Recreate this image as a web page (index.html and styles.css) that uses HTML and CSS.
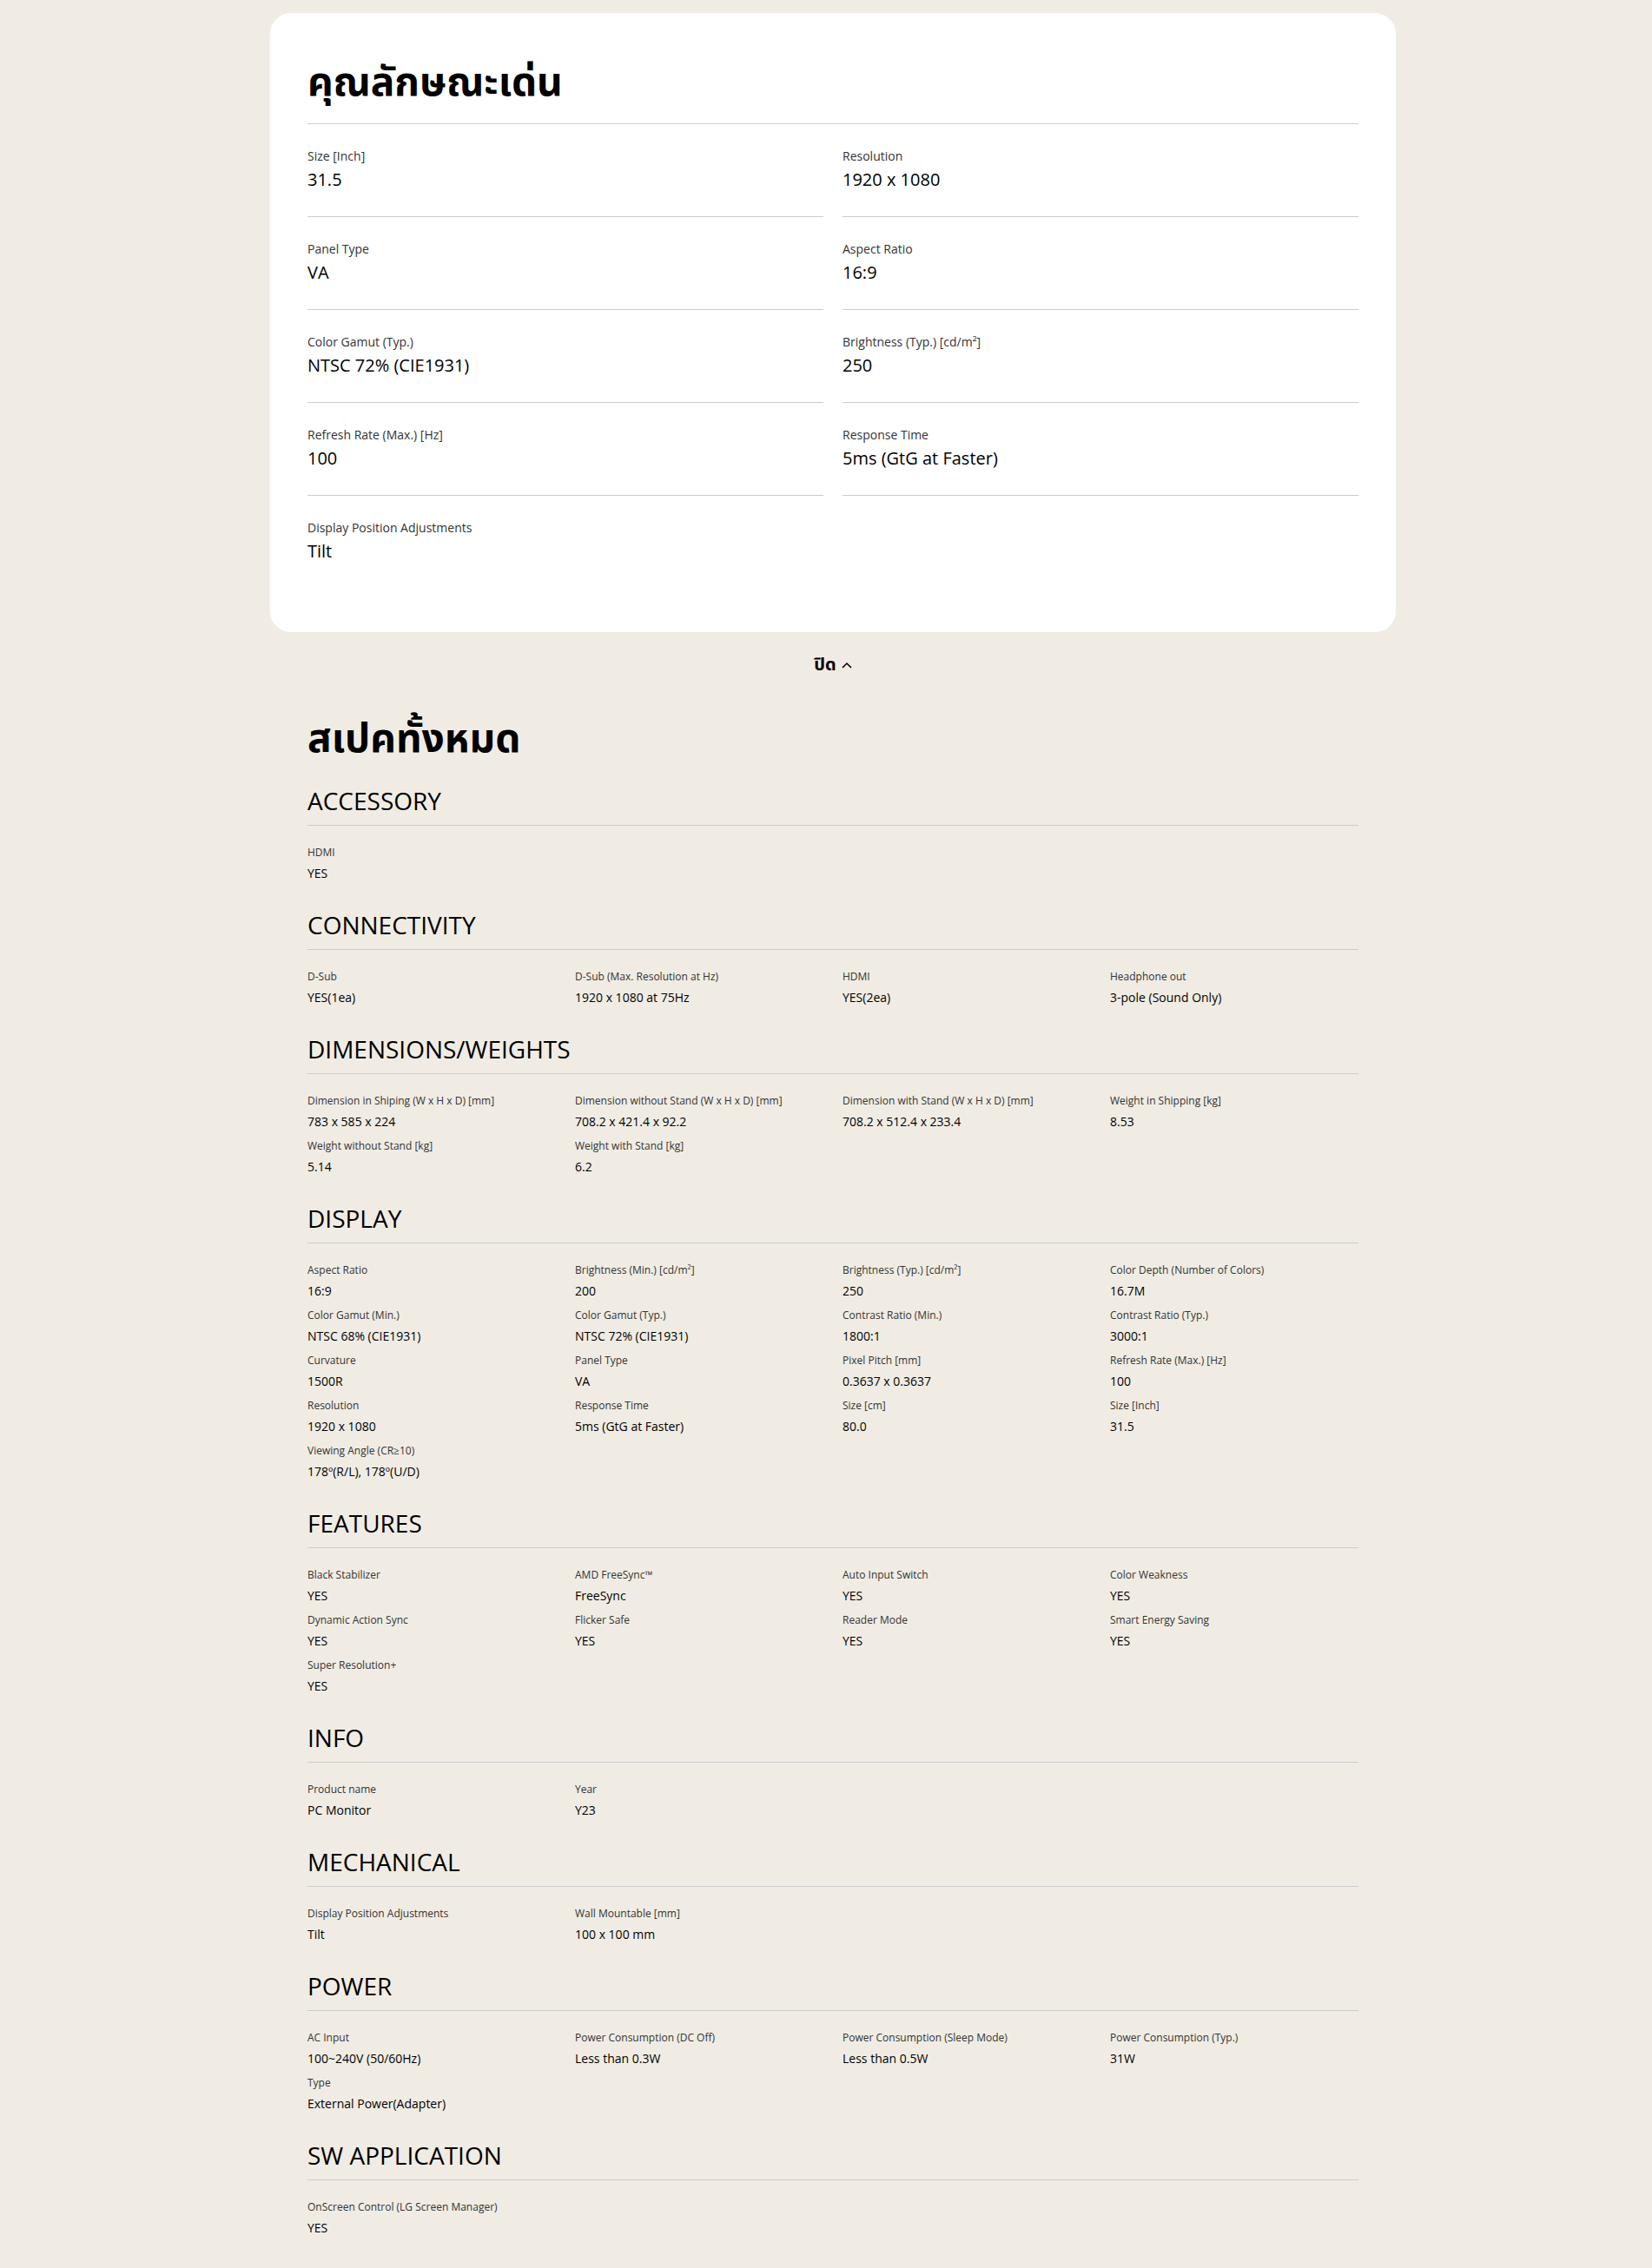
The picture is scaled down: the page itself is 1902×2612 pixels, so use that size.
FILE: index.html
```html
<!DOCTYPE html>
<html lang="th">
<head>
    <meta charset="UTF-8">
    <meta name="viewport" content="width=device-width, initial-scale=1.0">
    <title>สเปค PC Monitor</title>
    <link rel="stylesheet" href="styles.css">
</head>
<body>
    <div class="page">
        <section class="key-card">
            <h2 class="big-title">คุณลักษณะเด่น</h2>
            <div class="key-grid">
                <div class="key-item"><span class="key-label">Size [Inch]</span><span class="key-value">31.5</span></div>
                <div class="key-item"><span class="key-label">Resolution</span><span class="key-value">1920 x 1080</span></div>
                <div class="key-item"><span class="key-label">Panel Type</span><span class="key-value">VA</span></div>
                <div class="key-item"><span class="key-label">Aspect Ratio</span><span class="key-value">16:9</span></div>
                <div class="key-item"><span class="key-label">Color Gamut (Typ.)</span><span class="key-value">NTSC 72% (CIE1931)</span></div>
                <div class="key-item"><span class="key-label">Brightness (Typ.) [cd/m²]</span><span class="key-value">250</span></div>
                <div class="key-item"><span class="key-label">Refresh Rate (Max.) [Hz]</span><span class="key-value">100</span></div>
                <div class="key-item"><span class="key-label">Response Time</span><span class="key-value">5ms (GtG at Faster)</span></div>
                <div class="key-item"><span class="key-label">Display Position Adjustments</span><span class="key-value">Tilt</span></div>
            </div>
        </section>

        <div class="toggle-row">
            <button class="toggle-btn">ปิด
                <svg width="12" height="8" viewBox="0 0 12 8"><polyline points="1,7 6,2 11,7" fill="none" stroke="#000" stroke-width="1.5"/></svg>
            </button>
        </div>

        <div class="specs">
            <h2 class="big-title specs-title">สเปคทั้งหมด</h2>

            <section class="spec-section">
                <h3 class="spec-head">ACCESSORY</h3>
                <div class="spec-grid">
                    <div class="spec-item"><span class="spec-label">HDMI</span><span class="spec-value">YES</span></div>
                </div>
            </section>

            <section class="spec-section">
                <h3 class="spec-head">CONNECTIVITY</h3>
                <div class="spec-grid">
                    <div class="spec-item"><span class="spec-label">D-Sub</span><span class="spec-value">YES(1ea)</span></div>
                    <div class="spec-item"><span class="spec-label">D-Sub (Max. Resolution at Hz)</span><span class="spec-value">1920 x 1080 at 75Hz</span></div>
                    <div class="spec-item"><span class="spec-label">HDMI</span><span class="spec-value">YES(2ea)</span></div>
                    <div class="spec-item"><span class="spec-label">Headphone out</span><span class="spec-value">3-pole (Sound Only)</span></div>
                </div>
            </section>

            <section class="spec-section">
                <h3 class="spec-head">DIMENSIONS/WEIGHTS</h3>
                <div class="spec-grid">
                    <div class="spec-item"><span class="spec-label">Dimension in Shiping (W x H x D) [mm]</span><span class="spec-value">783 x 585 x 224</span></div>
                    <div class="spec-item"><span class="spec-label">Dimension without Stand (W x H x D) [mm]</span><span class="spec-value">708.2 x 421.4 x 92.2</span></div>
                    <div class="spec-item"><span class="spec-label">Dimension with Stand (W x H x D) [mm]</span><span class="spec-value">708.2 x 512.4 x 233.4</span></div>
                    <div class="spec-item"><span class="spec-label">Weight in Shipping [kg]</span><span class="spec-value">8.53</span></div>
                    <div class="spec-item"><span class="spec-label">Weight without Stand [kg]</span><span class="spec-value">5.14</span></div>
                    <div class="spec-item"><span class="spec-label">Weight with Stand [kg]</span><span class="spec-value">6.2</span></div>
                </div>
            </section>

            <section class="spec-section">
                <h3 class="spec-head">DISPLAY</h3>
                <div class="spec-grid">
                    <div class="spec-item"><span class="spec-label">Aspect Ratio</span><span class="spec-value">16:9</span></div>
                    <div class="spec-item"><span class="spec-label">Brightness (Min.) [cd/m²]</span><span class="spec-value">200</span></div>
                    <div class="spec-item"><span class="spec-label">Brightness (Typ.) [cd/m²]</span><span class="spec-value">250</span></div>
                    <div class="spec-item"><span class="spec-label">Color Depth (Number of Colors)</span><span class="spec-value">16.7M</span></div>
                    <div class="spec-item"><span class="spec-label">Color Gamut (Min.)</span><span class="spec-value">NTSC 68% (CIE1931)</span></div>
                    <div class="spec-item"><span class="spec-label">Color Gamut (Typ.)</span><span class="spec-value">NTSC 72% (CIE1931)</span></div>
                    <div class="spec-item"><span class="spec-label">Contrast Ratio (Min.)</span><span class="spec-value">1800:1</span></div>
                    <div class="spec-item"><span class="spec-label">Contrast Ratio (Typ.)</span><span class="spec-value">3000:1</span></div>
                    <div class="spec-item"><span class="spec-label">Curvature</span><span class="spec-value">1500R</span></div>
                    <div class="spec-item"><span class="spec-label">Panel Type</span><span class="spec-value">VA</span></div>
                    <div class="spec-item"><span class="spec-label">Pixel Pitch [mm]</span><span class="spec-value">0.3637 x 0.3637</span></div>
                    <div class="spec-item"><span class="spec-label">Refresh Rate (Max.) [Hz]</span><span class="spec-value">100</span></div>
                    <div class="spec-item"><span class="spec-label">Resolution</span><span class="spec-value">1920 x 1080</span></div>
                    <div class="spec-item"><span class="spec-label">Response Time</span><span class="spec-value">5ms (GtG at Faster)</span></div>
                    <div class="spec-item"><span class="spec-label">Size [cm]</span><span class="spec-value">80.0</span></div>
                    <div class="spec-item"><span class="spec-label">Size [Inch]</span><span class="spec-value">31.5</span></div>
                    <div class="spec-item"><span class="spec-label">Viewing Angle (CR≥10)</span><span class="spec-value">178º(R/L), 178º(U/D)</span></div>
                </div>
            </section>

            <section class="spec-section">
                <h3 class="spec-head">FEATURES</h3>
                <div class="spec-grid">
                    <div class="spec-item"><span class="spec-label">Black Stabilizer</span><span class="spec-value">YES</span></div>
                    <div class="spec-item"><span class="spec-label">AMD FreeSync™</span><span class="spec-value">FreeSync</span></div>
                    <div class="spec-item"><span class="spec-label">Auto Input Switch</span><span class="spec-value">YES</span></div>
                    <div class="spec-item"><span class="spec-label">Color Weakness</span><span class="spec-value">YES</span></div>
                    <div class="spec-item"><span class="spec-label">Dynamic Action Sync</span><span class="spec-value">YES</span></div>
                    <div class="spec-item"><span class="spec-label">Flicker Safe</span><span class="spec-value">YES</span></div>
                    <div class="spec-item"><span class="spec-label">Reader Mode</span><span class="spec-value">YES</span></div>
                    <div class="spec-item"><span class="spec-label">Smart Energy Saving</span><span class="spec-value">YES</span></div>
                    <div class="spec-item"><span class="spec-label">Super Resolution+</span><span class="spec-value">YES</span></div>
                </div>
            </section>

            <section class="spec-section">
                <h3 class="spec-head">INFO</h3>
                <div class="spec-grid">
                    <div class="spec-item"><span class="spec-label">Product name</span><span class="spec-value">PC Monitor</span></div>
                    <div class="spec-item"><span class="spec-label">Year</span><span class="spec-value">Y23</span></div>
                </div>
            </section>

            <section class="spec-section">
                <h3 class="spec-head">MECHANICAL</h3>
                <div class="spec-grid">
                    <div class="spec-item"><span class="spec-label">Display Position Adjustments</span><span class="spec-value">Tilt</span></div>
                    <div class="spec-item"><span class="spec-label">Wall Mountable [mm]</span><span class="spec-value">100 x 100 mm</span></div>
                </div>
            </section>

            <section class="spec-section">
                <h3 class="spec-head">POWER</h3>
                <div class="spec-grid">
                    <div class="spec-item"><span class="spec-label">AC Input</span><span class="spec-value">100~240V (50/60Hz)</span></div>
                    <div class="spec-item"><span class="spec-label">Power Consumption (DC Off)</span><span class="spec-value">Less than 0.3W</span></div>
                    <div class="spec-item"><span class="spec-label">Power Consumption (Sleep Mode)</span><span class="spec-value">Less than 0.5W</span></div>
                    <div class="spec-item"><span class="spec-label">Power Consumption (Typ.)</span><span class="spec-value">31W</span></div>
                    <div class="spec-item"><span class="spec-label">Type</span><span class="spec-value">External Power(Adapter)</span></div>
                </div>
            </section>

            <section class="spec-section">
                <h3 class="spec-head">SW APPLICATION</h3>
                <div class="spec-grid">
                    <div class="spec-item"><span class="spec-label">OnScreen Control (LG Screen Manager)</span><span class="spec-value">YES</span></div>
                </div>
            </section>
        </div>
    </div>
</body>
</html>
```

FILE: styles.css
```css
body {
    margin: 0;
    background-color: #f0ece4;
    color: #000;
    font-family: 'Open Sans', 'Noto Sans Thai', 'Noto Sans', sans-serif;
}
.page {
    width: 1296px;
    margin-left: 311px;
    padding: 15px 0 34px;
}
.key-card {
    background-color: #fff;
    border-radius: 24px;
    padding: 0 43px 52px;
}
.big-title {
    font-family: 'Noto Sans Thai', 'Noto Sans Thai UI', 'Noto Sans', 'DejaVu Sans', sans-serif;
    font-size: 46px;
    font-weight: 700;
    line-height: 60px;
    margin: 0;
}
.key-card .big-title {
    padding-top: 51px;
    padding-bottom: 16px;
    border-bottom: 1px solid #cccccc;
}
.key-grid {
    display: grid;
    grid-template-columns: 1fr 1fr;
    column-gap: 22px;
}
.key-item {
    display: flex;
    flex-direction: column;
    gap: 3px;
    padding: 27px 0 28px;
    border-bottom: 1px solid #cccccc;
}
.key-item:last-child {
    border-bottom: none;
    padding-bottom: 27px;
}
.key-label {
    font-size: 14px;
    line-height: 20px;
    color: #333;
}
.key-value {
    font-size: 20px;
    line-height: 28px;
}
.toggle-row {
    display: flex;
    justify-content: center;
    padding: 24px 0 0;
}
.toggle-btn {
    background: none;
    border: none;
    padding: 0;
    font-family: 'Noto Sans Thai', 'Noto Sans', sans-serif;
    font-size: 20px;
    font-weight: 700;
    line-height: 28px;
    color: #000;
    display: flex;
    align-items: center;
    gap: 6px;
    cursor: pointer;
}
.specs {
    padding: 0 43px;
}
.specs-title {
    margin-top: 42px;
    margin-bottom: 22px;
}
.spec-section + .spec-section {
    margin-top: 31px;
}
.spec-head {
    font-size: 28px;
    font-weight: 400;
    line-height: 36px;
    margin: 0;
    padding-bottom: 10px;
    border-bottom: 1px solid #cccccc;
}
.spec-grid {
    display: grid;
    grid-template-columns: repeat(4, 1fr);
    column-gap: 22px;
    row-gap: 9px;
    padding-top: 22px;
}
.spec-item {
    display: flex;
    flex-direction: column;
    gap: 5px;
}
.spec-label {
    font-size: 12px;
    line-height: 18px;
    color: #333;
}
.spec-value {
    font-size: 14px;
    line-height: 20px;
}
```
